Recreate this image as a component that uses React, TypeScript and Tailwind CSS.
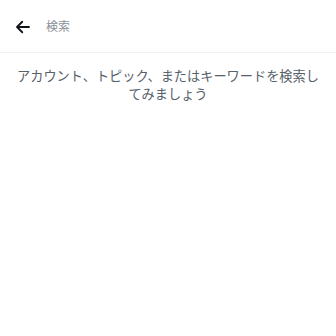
import React from 'react';

export default function App() {
  return (
    <div
      className="w-[336px] h-[336px] bg-white"
      style={{ fontFamily: '"Noto Sans", "Noto Sans CJK JP", sans-serif' }}
    >
      <div className="h-[53px] pt-[2px] flex items-center px-[14px] border-b border-[#eff3f4]">
        <svg width="18" height="18" viewBox="0 0 24 24" className="text-[#0f1419]">
          <path
            d="M20 12H5M11 5l-7 7 7 7"
            fill="none"
            stroke="currentColor"
            strokeWidth="2.4"
            strokeLinecap="round"
            strokeLinejoin="round"
          />
        </svg>
        <span className="ml-[14px] text-[12px] text-[#8a9096]">検索</span>
      </div>
      <p className="px-4 pt-[14px] text-center text-[13.2px] leading-[18px] text-[#56616a]">
        アカウント、トピック、またはキーワードを検索してみましょう
      </p>
    </div>
  );
}
